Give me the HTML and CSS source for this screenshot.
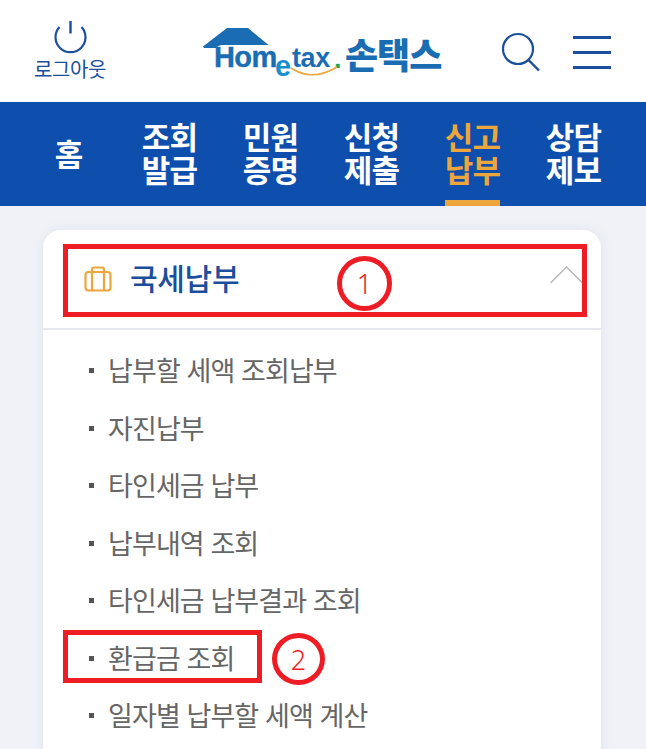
FILE: index.html
```html
<!DOCTYPE html>
<html lang="ko">
<head>
<meta charset="utf-8">
<title>손택스</title>
<link rel="stylesheet" href="styles.css">
</head>
<body>
<div class="page">
  <header class="top">
    <div class="logout">
      <svg class="power" width="33" height="33" viewBox="0 0 33 33"><path d="M5.5 6a15 15 0 1 0 22 0" fill="none" stroke="#1b4f9c" stroke-width="2.2"/><path d="M16.5 0v12.5" fill="none" stroke="#1b4f9c" stroke-width="2.4"/></svg>
      <span class="logout-text">로그아웃</span>
    </div>
    <div class="logo">
      <svg class="roof" width="68" height="24" viewBox="0 0 68 24"><path d="M0 19.5 L24 1 H45 L65.5 18 H20 Q15 18 13 21 H1 Z" fill="#1b6db3"/></svg>
      <span class="logo-home">Hom</span><span class="logo-e">e</span><span class="logo-tax">tax</span><span class="logo-dot">.</span>
      <svg class="smile" width="48" height="14" viewBox="0 0 48 14"><path d="M1 2 Q22 16 47 1" fill="none" stroke="#eda63b" stroke-width="1.6"/></svg>
      <span class="logo-kr">손택스</span>
    </div>
    <div class="top-icons">
      <svg width="40" height="40" viewBox="0 0 40 40"><circle cx="17" cy="17" r="15" fill="none" stroke="#1b4f9c" stroke-width="2.2"/><path d="M27.5 28 L38 38.5" fill="none" stroke="#1b4f9c" stroke-width="2.4"/></svg>
      <div class="burger"><i></i><i></i><i></i></div>
    </div>
  </header>
  <nav class="nav">
    <a class="nav-item">홈</a>
    <a class="nav-item">조회<br>발급</a>
    <a class="nav-item">민원<br>증명</a>
    <a class="nav-item">신청<br>제출</a>
    <a class="nav-item active">신고<br>납부</a>
    <a class="nav-item">상담<br>제보</a>
  </nav>
  <main class="content">
    <section class="card">
      <div class="card-head">
        <svg class="bag" width="28" height="26" viewBox="0 0 28 26"><rect x="1.5" y="6" width="25" height="18.5" rx="3" fill="none" stroke="#eda63b" stroke-width="2.2"/><path d="M8 6V3.5Q8 1.5 10 1.5H18Q20 1.5 20 3.5V6M8 6V24.5M20 6V24.5" fill="none" stroke="#eda63b" stroke-width="2.2"/></svg>
        <h2 class="card-title">국세납부</h2>
        <svg class="chev" width="33" height="18" viewBox="0 0 33 18"><path d="M0.5 17 L16.5 1 L32.5 17" fill="none" stroke="#b5b5b5" stroke-width="1.4"/></svg>
      </div>
      <ul class="menu">
        <li>납부할 세액 조회납부</li>
        <li>자진납부</li>
        <li>타인세금 납부</li>
        <li>납부내역 조회</li>
        <li>타인세금 납부결과 조회</li>
        <li class="marked">환급금 조회<span class="box box-2"></span><span class="num num-2">2</span></li>
        <li>일자별 납부할 세액 계산</li>
      </ul>
      <span class="box box-1"></span>
      <span class="num num-1">1</span>
    </section>
  </main>
</div>
</body>
</html>
```
FILE: styles.css
```css
* { box-sizing: border-box; }
html, body { margin: 0; padding: 0; }
body { font-family: "Noto Sans CJK KR", "Noto Sans", sans-serif; background: #f0f2f8; }
.page { width: 646px; height: 749px; overflow: hidden; }
.top { height: 102px; background: #fff; display: flex; align-items: center; padding: 0 35px 0 34px; position: relative; }
.logout { width: 72px; display: flex; flex-direction: column; align-items: center; margin-top: -1px; }
.power { display: block; }
.logout-text { font-size: 20px; line-height: 24px; color: #1b4f9c; letter-spacing: -0.4px; margin-top: 3px; white-space: nowrap; }
.logo { position: absolute; left: 203px; top: 26px; width: 240px; height: 56px; }
.roof { position: absolute; left: 0; top: 1px; }
.logo span { position: absolute; font-family: "Liberation Sans", sans-serif; font-weight: 700; line-height: 1; }
.logo-home { left: 11px; top: 17px; font-size: 29px; color: #1b6db3; letter-spacing: -0.6px; -webkit-text-stroke: 0.4px #1b6db3; }
.logo-e { left: 72px; top: 26px; font-size: 29px; color: #1b8fce; }
.logo-tax { left: 89px; top: 19px; font-size: 27px; color: #1b6db3; letter-spacing: -0.4px; }
.logo-dot { left: 131px; top: 20px; font-size: 27px; color: #1fa64a; }
.smile { position: absolute; left: 87px; top: 40px; }
.logo span.logo-kr { left: 142px; top: 5px; font-family: "Noto Sans CJK KR", sans-serif; font-size: 36px; font-weight: 900; color: #1b6db3; letter-spacing: -1px; line-height: 44px; white-space: nowrap; }
.top-icons { margin-left: auto; display: flex; align-items: center; gap: 32px; margin-top: 2px; }
.burger { width: 38px; height: 33px; display: flex; flex-direction: column; justify-content: space-between; }
.burger i { display: block; height: 3px; background: #1b4f9c; }
.nav { height: 104px; background: #0e4ead; display: flex; padding: 0 22px 0 18px; }
.nav-item { flex: 1; display: flex; flex-direction: column; align-items: center; justify-content: center; text-align: center; color: #fff; font-size: 31px; line-height: 33px; font-weight: 700; letter-spacing: -0.8px; position: relative; padding-bottom: 4px; }
.nav-item.active { color: #eda63b; }
.nav-item.active::after { content: ""; position: absolute; left: 50%; bottom: 0; width: 55px; margin-left: -27.5px; height: 6px; background: #eda63b; }
.content { padding: 24px 45px 0 43px; }
.card { position: relative; background: #fff; border-radius: 18px 18px 0 0; box-shadow: 0 0 12px rgba(120,130,170,.12); height: 560px; }
.card-head { height: 100px; border-bottom: 2px solid #e6e8ee; display: flex; align-items: center; padding: 0 18px 4px 41px; gap: 18px; }
.bag { flex: none; margin-top: 4px; }
.card-title { margin: 0; font-size: 30px; line-height: 40px; font-weight: 500; color: #1b4f9c; letter-spacing: -0.3px; flex: 1; }
.chev { margin-top: -4px; }
.menu { list-style: none; margin: 0; padding: 11px 0 0 46px; }
.menu li { position: relative; height: 57.5px; line-height: 57.5px; font-size: 27px; color: #666; letter-spacing: -0.9px; padding-left: 19px; }
.menu li::before { content: ""; position: absolute; left: 0; top: 27px; width: 5px; height: 5px; background: #555; }
.box { position: absolute; border: 5px solid #ee1c25; }
.box-1 { left: 20px; top: 14px; width: 524px; height: 73px; }
.box-2 { left: -26px; top: 1.5px; width: 199px; height: 53px; }
.num { position: absolute; border: 5px solid #ee1c25; border-radius: 50%; color: #ee1c25; font-family: "Noto Sans", sans-serif; font-weight: 300; display: flex; align-items: center; justify-content: center; font-size: 27px; line-height: 1; letter-spacing: 0; }
.num-1 { left: 294px; top: 26px; width: 55px; height: 55px; }
.num-2 { left: 183px; top: 4.5px; width: 53px; height: 52px; }
```
